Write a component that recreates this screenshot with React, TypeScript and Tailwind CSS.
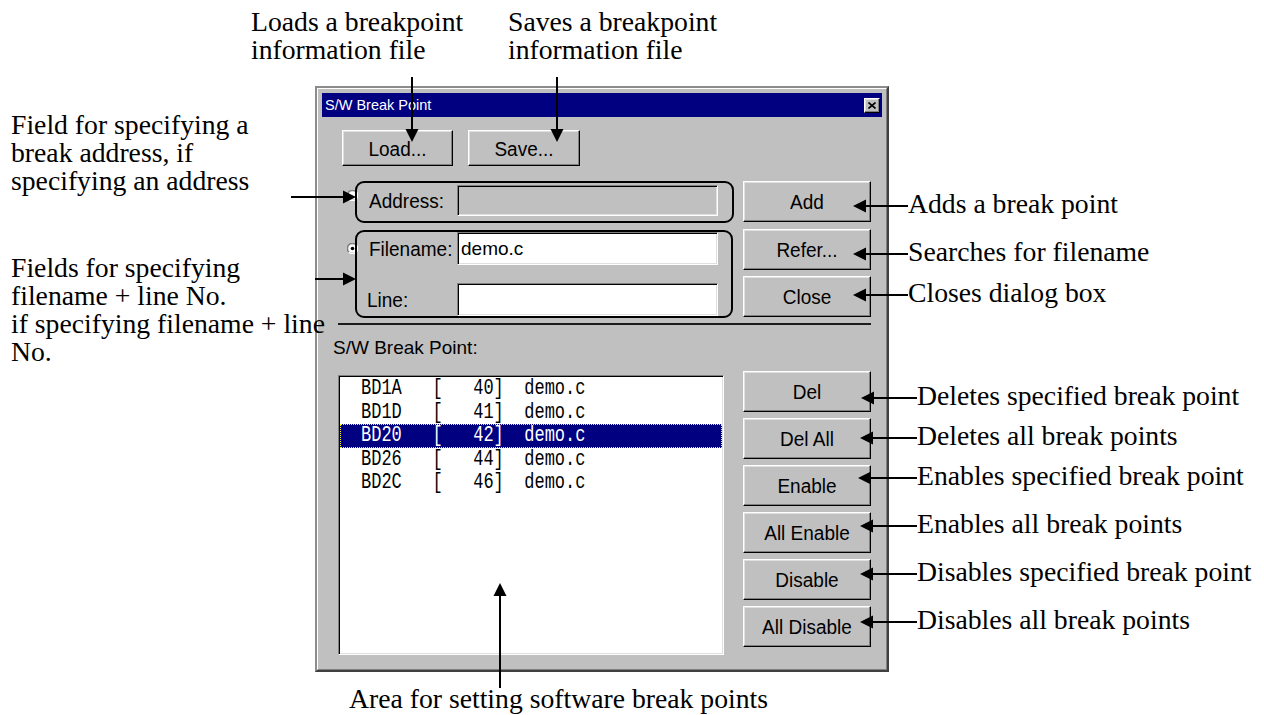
import React from 'react';

type Arrow = { x1: number; y1: number; x2: number; y2: number };

const arrows: Arrow[] = [
  { x1: 412, y1: 77, x2: 412, y2: 142 },
  { x1: 557, y1: 77, x2: 557, y2: 142 },
  { x1: 291, y1: 197, x2: 356, y2: 197 },
  { x1: 315, y1: 279, x2: 356, y2: 279 },
  { x1: 908, y1: 206, x2: 853, y2: 206 },
  { x1: 908, y1: 254, x2: 853, y2: 254 },
  { x1: 908, y1: 295, x2: 853, y2: 295 },
  { x1: 917, y1: 398, x2: 861, y2: 398 },
  { x1: 917, y1: 438, x2: 860, y2: 438 },
  { x1: 917, y1: 478, x2: 858, y2: 478 },
  { x1: 917, y1: 526, x2: 860, y2: 526 },
  { x1: 917, y1: 574, x2: 860, y2: 574 },
  { x1: 917, y1: 622, x2: 860, y2: 622 },
  { x1: 500, y1: 688, x2: 500, y2: 583 },
];

const breakpoints = [
  { addr: 'BD1A', line: '40' },
  { addr: 'BD1D', line: '41' },
  { addr: 'BD20', line: '42', selected: true },
  { addr: 'BD26', line: '44' },
  { addr: 'BD2C', line: '46' },
];

const raised =
  'bg-[#c0c0c0] border border-t-white border-l-white border-r-black border-b-black shadow-[inset_-1px_-1px_0_#808080,inset_1px_1px_0_#dfdfdf]';
const sunken =
  'border border-t-[#808080] border-l-[#808080] border-r-white border-b-white shadow-[inset_1px_1px_0_#000,inset_-1px_-1px_0_#dfdfdf]';

const Btn = ({ label, className = '' }: { label: string; className?: string }) => (
  <div className={`${raised} flex items-center justify-center text-[19px] leading-none ${className}`}>
    <span className="inline-block scale-y-[1.08]">{label}</span>
  </div>
);

const Radio = ({ checked }: { checked?: boolean }) => (
  <svg width="11" height="11" viewBox="0 0 12 12">
    <path d="M10 2 A5.5 5.5 0 0 0 2 10" fill="none" stroke="#808080" strokeWidth="1.5" />
    <path d="M2 10 A5.5 5.5 0 0 0 10 2" fill="none" stroke="#ffffff" strokeWidth="1.5" />
    <circle cx="6" cy="6" r="4.3" fill="#ffffff" />
    {checked && <circle cx="6" cy="6" r="2" fill="#000000" />}
  </svg>
);

const Dialog = () => (
  <div className="w-[574px] h-[586px] bg-[#c0c0c0] border-2 border-t-[#8c8c8c] border-l-[#8c8c8c] border-r-[#404040] border-b-[#404040] font-['Liberation_Sans',Arial,sans-serif] text-black">
    <div className="h-full border border-t-white border-l-white border-r-[#808080] border-b-[#808080] p-[4px] flex flex-col">
      {/* title bar */}
      <div className="h-[24px] bg-[#000080] flex items-center justify-between pl-[3px] pr-[2px]">
        <span className="text-white text-[14.5px] leading-none">S/W Break Point</span>
        <div className={`${raised} w-[16px] h-[15px] flex items-center justify-center`}>
          <svg width="8" height="7" viewBox="0 0 8 7">
            <path d="M0.5 0.5 L7.5 6.5 M7.5 0.5 L0.5 6.5" stroke="#000" strokeWidth="1.6" />
          </svg>
        </div>
      </div>

      <div className="pt-[13px]">
        <div className="flex gap-[15px] pl-[20px]">
          <Btn label="Load..." className="w-[111px] h-[36px]" />
          <Btn label="Save..." className="w-[112px] h-[36px]" />
        </div>

        <div className="flex mt-[15px]">
          <div className="flex flex-col">
            <div className="flex items-center mt-[4px] h-[31px]">
              <div className="ml-[25px] w-[11px] h-[11px] mb-[10px]">
                <Radio />
              </div>
              <span className="ml-[11px] w-[88px] text-[19px] leading-none scale-y-[1.08]">Address:</span>
              <div className={`${sunken} w-[261px] h-full bg-[#c0c0c0]`} />
            </div>
            <div className="flex items-center mt-[16px] h-[33px]">
              <div className="ml-[25px] w-[11px] h-[11px]">
                <Radio checked />
              </div>
              <span className="ml-[11px] w-[88px] text-[19px] leading-none scale-y-[1.08]">Filename:</span>
              <div className={`${sunken} w-[261px] h-full bg-white flex items-center pl-[3px] text-[19px] leading-none`}>
                demo.c
              </div>
            </div>
            <div className="flex items-center mt-[18px] h-[33px]">
              <div className="ml-[25px] w-[11px]" />
              <span className="ml-[9px] w-[90px] text-[19px] leading-none scale-y-[1.08]">Line:</span>
              <div className={`${sunken} w-[261px] h-full bg-white`} />
            </div>
          </div>
          <div className="ml-auto mr-[11px] w-[128px] flex flex-col gap-[6.5px]">
            <Btn label="Add" className="h-[41px]" />
            <Btn label="Refer..." className="h-[41px]" />
            <Btn label="Close" className="h-[41px]" />
          </div>
        </div>

        <div className="mt-[6px] ml-[16px] w-[533px] h-[2px] bg-[#1c1c1c]" />

        <div className="mt-[13px] ml-[11px] h-[20px] text-[19px] leading-[20px]">S/W Break Point:</div>

        <div className="flex mt-[13px]">
          <div className={`${sunken} ml-[16px] mt-[4px] w-[386px] h-[280px] bg-white pt-[1px] px-[1px]`}>
            {breakpoints.map((bp) => (
              <div
                key={bp.addr}
                className={`h-[23.5px] flex items-center pl-[21px] font-['Liberation_Mono','DejaVu_Sans_Mono',monospace] text-[17px] leading-none whitespace-pre ${
                  bp.selected
                    ? 'bg-[#000080] text-white outline outline-1 outline-dotted outline-[#ffff00] -outline-offset-1'
                    : 'text-black'
                }`}
              >
                <span className="inline-block scale-y-[1.3]">{`${bp.addr}   [   ${bp.line}]  demo.c`}</span>
              </div>
            ))}
          </div>
          <div className="ml-auto mr-[11px] w-[128px] flex flex-col gap-[6px]">
            <Btn label="Del" className="h-[41px]" />
            <Btn label="Del All" className="h-[41px]" />
            <Btn label="Enable" className="h-[41px]" />
            <Btn label="All Enable" className="h-[41px]" />
            <Btn label="Disable" className="h-[41px]" />
            <Btn label="All Disable" className="h-[41px]" />
          </div>
        </div>
      </div>
    </div>
  </div>
);

const note = "absolute font-['Liberation_Serif','Times_New_Roman',serif] text-[27.7px] leading-[28px] text-black whitespace-nowrap";

const ArrowHead = ({ a }: { a: Arrow }) => {
  const dx = a.x2 - a.x1;
  const dy = a.y2 - a.y1;
  const len = Math.hypot(dx, dy);
  const ux = dx / len;
  const uy = dy / len;
  const bx = a.x2 - ux * 13;
  const by = a.y2 - uy * 13;
  const px = -uy * 6.5;
  const py = ux * 6.5;
  return (
    <g>
      <line x1={a.x1} y1={a.y1} x2={bx} y2={by} stroke="#000" strokeWidth="2" />
      <polygon points={`${a.x2},${a.y2} ${bx + px},${by + py} ${bx - px},${by - py}`} fill="#000" />
    </g>
  );
};

export default function App() {
  return (
    <div className="relative w-[1264px] h-[715px] bg-white overflow-hidden">
      <div className="pl-[315px] pt-[86px]">
        <Dialog />
      </div>

      {/* callout boxes round the field groups */}
      <div className="absolute left-[355px] top-[181px] w-[379px] h-[42px] border-2 border-black rounded-[9px]" />
      <div className="absolute left-[355px] top-[230px] w-[378px] h-[88px] border-2 border-black rounded-[9px]" />

      <div className={`${note} left-[251px] top-[8px]`}>
        Loads a breakpoint
        <br />
        information file
      </div>
      <div className={`${note} left-[508px] top-[8px]`}>
        Saves a breakpoint
        <br />
        information file
      </div>
      <div className={`${note} left-[11px] top-[111px]`}>
        Field for specifying a
        <br />
        break address, if
        <br />
        specifying an address
      </div>
      <div className={`${note} left-[11px] top-[254px]`}>
        Fields for specifying
        <br />
        filename + line No.
        <br />
        if specifying filename + line
        <br />
        No.
      </div>

      <div className={`${note} left-[908px] top-[190px]`}>Adds a break point</div>
      <div className={`${note} left-[908px] top-[238px]`}>Searches for filename</div>
      <div className={`${note} left-[908px] top-[279px]`}>Closes dialog box</div>
      <div className={`${note} left-[917px] top-[382px]`}>Deletes specified break point</div>
      <div className={`${note} left-[917px] top-[422px]`}>Deletes all break points</div>
      <div className={`${note} left-[917px] top-[462px]`}>Enables specified break point</div>
      <div className={`${note} left-[917px] top-[510px]`}>Enables all break points</div>
      <div className={`${note} left-[917px] top-[558px]`}>Disables specified break point</div>
      <div className={`${note} left-[917px] top-[606px]`}>Disables all break points</div>
      <div className={`${note} left-[349px] top-[685px]`}>Area for setting software break points</div>

      <svg className="absolute inset-0 pointer-events-none" width="1264" height="715">
        {arrows.map((a, i) => (
          <ArrowHead key={i} a={a} />
        ))}
      </svg>
    </div>
  );
}
